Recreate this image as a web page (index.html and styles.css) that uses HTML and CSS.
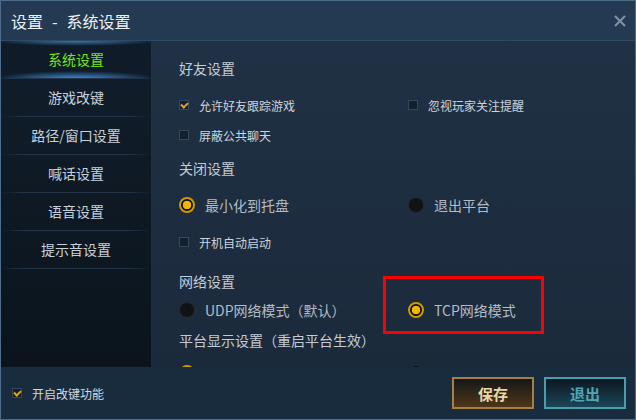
FILE: index.html
```html
<!DOCTYPE html>
<html lang="zh-CN">
<head>
    <meta charset="UTF-8">
    <title>设置 - 系统设置</title>
    <link rel="stylesheet" href="styles.css">
</head>
<body>
    <div class="window">
        <div class="titlebar">
            <span class="title">设置<span class="dash">-</span>系统设置</span>
            <svg class="close" width="12" height="12" viewBox="0 0 12 12">
                <path d="M1 1 L11 11 M11 1 L1 11" stroke="#7f8fa1" stroke-width="2.2" fill="none"/>
            </svg>
        </div>

        <div class="main">
            <!-- Left menu -->
            <ul class="nav">
                <li class="active">系统设置</li>
                <li>游戏改键</li>
                <li>路径/窗口设置</li>
                <li>喊话设置</li>
                <li>语音设置</li>
                <li>提示音设置</li>
            </ul>

            <!-- Settings list -->
            <div class="content">
                <div class="heading">好友设置</div>
                <div class="row gap-l">
                    <div class="col">
                        <label class="check on"><span class="box"></span>允许好友跟踪游戏</label>
                    </div>
                    <label class="check"><span class="box"></span>忽视玩家关注提醒</label>
                </div>
                <div class="row gap-s">
                    <label class="check"><span class="box"></span>屏蔽公共聊天</label>
                </div>

                <div class="heading gap-m">关闭设置</div>
                <div class="row gap-l">
                    <div class="col">
                        <label class="radio on"><span class="dot"></span>最小化到托盘</label>
                    </div>
                    <label class="radio"><span class="dot"></span>退出平台</label>
                </div>
                <div class="row gap-l">
                    <label class="check"><span class="box"></span>开机自动启动</label>
                </div>

                <div class="heading gap-xl">网络设置</div>
                <div class="row gap-xs">
                    <div class="col">
                        <label class="radio"><span class="dot"></span>UDP网络模式（默认）</label>
                    </div>
                    <label class="radio on"><span class="dot"></span>TCP网络模式</label>
                </div>

                <div class="heading gap-s">平台显示设置（重启平台生效）</div>
                <div class="row gap-m">
                    <div class="col">
                        <label class="radio on"><span class="dot"></span>小界面</label>
                    </div>
                    <label class="radio"><span class="dot"></span>大界面（推荐）</label>
                </div>

                <!-- red marker around the TCP option -->
                <div class="highlight"></div>
            </div>
        </div>

        <div class="footer">
            <label class="check on"><span class="box"></span>开启改键功能</label>
            <div class="buttons">
                <button class="btn save">保存</button>
                <button class="btn quit">退出</button>
            </div>
        </div>
    </div>
</body>
</html>
```

FILE: styles.css
```css
* {
    box-sizing: border-box;
}
body {
    margin: 0;
    background: #1b2a3b;
    font-family: "Noto Sans CJK SC", "Noto Sans", sans-serif;
}
.window {
    width: 636px;
    height: 420px;
    border: 1px solid #4e6d8b;
    display: flex;
    flex-direction: column;
    overflow: hidden;
}

/* Title bar */
.titlebar {
    height: 40px;
    flex: none;
    display: flex;
    align-items: center;
    justify-content: space-between;
    padding: 0 9px 0 10px;
    background: #243a52;
    border-bottom: 1px solid #2f4a63;
}
.title {
    font-size: 16px;
    color: #eef2f6;
}
.dash {
    padding: 0 9px;
}
.close {
    display: block;
}

/* Body */
.main {
    flex: 1;
    display: flex;
    min-height: 0;
}
.nav {
    width: 150px;
    flex: none;
    margin: 0;
    padding: 0;
    list-style: none;
    background: linear-gradient(#111e2b, #0b141c);
}
.nav li {
    height: 38px;
    line-height: 37px;
    text-align: center;
    font-size: 14px;
    color: #c8d1da;
    background: linear-gradient(90deg, transparent, #23344a 15%, #23344a 85%, transparent) bottom / 100% 1px no-repeat;
}
.nav li.active {
    color: #74e61c;
    background:
        linear-gradient(90deg, transparent, #23344a 15%, #23344a 85%, transparent) bottom / 100% 1px no-repeat,
        radial-gradient(ellipse 55% 5px at 50% 0, rgba(70, 150, 225, 0.75), transparent),
        radial-gradient(ellipse 55% 8px at 50% 100%, rgba(70, 160, 240, 0.9), transparent),
        #0f1b28;
}

.content {
    flex: 1;
    position: relative;
    overflow: hidden;
    padding: 17px 0 0 28px;
    background: linear-gradient(#203145, #1b2a3b);
}
.heading {
    height: 20px;
    line-height: 20px;
    font-size: 14px;
    color: #c3ccd6;
}
.row {
    height: 20px;
    display: flex;
    align-items: center;
}
.col {
    width: 229px;
    flex: none;
}
.gap-xs { margin-top: 9px; }
.gap-s  { margin-top: 10px; }
.gap-m  { margin-top: 13px; }
.gap-l  { margin-top: 17px; }
.gap-xl { margin-top: 19px; }

/* Checkbox */
.check {
    display: flex;
    align-items: center;
    gap: 10px;
    font-size: 12px;
    color: #ccd4dc;
}
.box {
    width: 10px;
    height: 10px;
    border: 1px solid #36475a;
    background: #122030;
    position: relative;
}
.check.on .box::after {
    content: "";
    position: absolute;
    left: 1px;
    top: 1px;
    width: 5px;
    height: 3px;
    border-left: 2px solid #e3a21c;
    border-bottom: 2px solid #e3a21c;
    transform: rotate(-45deg);
}

/* Radio */
.radio {
    display: flex;
    align-items: center;
    gap: 10px;
    font-size: 14px;
    color: #b4bcc5;
}
.dot {
    width: 16px;
    height: 16px;
    border-radius: 50%;
    background: #111213;
    border: 1px solid #25292e;
}
.radio.on .dot {
    border: 2px solid #c99c00;
    background: radial-gradient(circle, #f2b600 0 4px, #0d0d0d 4.6px);
}

.highlight {
    position: absolute;
    left: 232px;
    top: 235px;
    width: 161px;
    height: 58px;
    border: 3px solid #ff0000;
}

/* Footer */
.footer {
    height: 52px;
    flex: none;
    display: flex;
    align-items: center;
    justify-content: space-between;
    padding: 0 9px 0 11px;
    background: #182c3d;
}
.footer .check {
    color: #d0d8e0;
}
.buttons {
    display: flex;
    gap: 10px;
}
.btn {
    width: 82px;
    height: 32px;
    font-family: inherit;
    font-size: 15px;
    font-weight: bold;
    border: 2px solid;
    cursor: pointer;
}
.save {
    color: #e8d8a6;
    border-color: #a5803f;
    background: linear-gradient(#161718, #4d3619);
}
.quit {
    color: #4fa5b5;
    border-color: #4a9dad;
    background: linear-gradient(#0c1720, #1b4657);
}
```
